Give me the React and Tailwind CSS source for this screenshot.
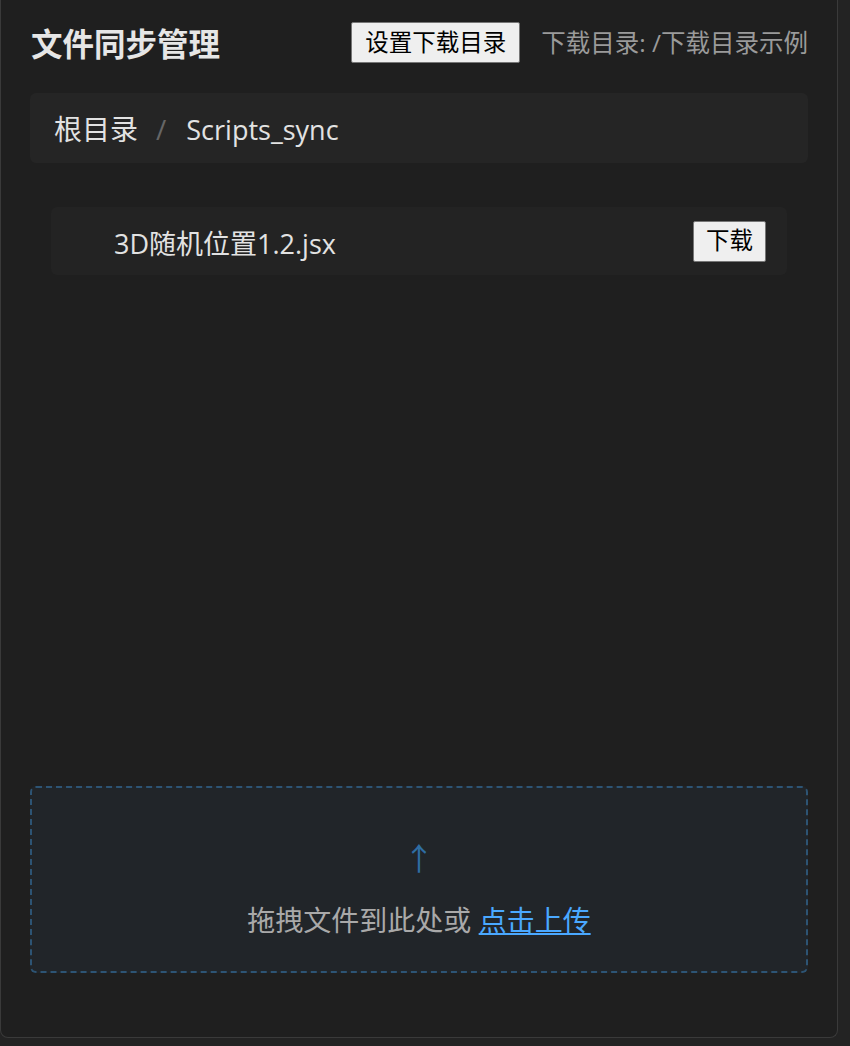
import React from "react";

const files = [{ name: "3D随机位置1.2.jsx" }];

const font = "font-['Open_Sans','Noto_Sans_CJK_SC',sans-serif]";

const App = () => {
  return (
    <div className={`min-h-screen bg-[#232323] ${font}`}>
      <div className="w-[838px] h-[1038px] bg-[#1f1f1f] border border-t-0 border-[#3a3a3a] rounded-b-lg flex flex-col px-[29px] pt-[22px] pb-[64px]">
        {/* Header */}
        <div className="flex items-center justify-between h-[41px]">
          <h1 className="text-[31.5px] font-bold leading-none text-[#e6e6e6] pl-px pt-[2px]">
            文件同步管理
          </h1>
          <div className="flex items-center gap-[21px]">
            <button className="h-[41px] px-[13px] bg-[#efefef] border border-[#767676] rounded-[2px] text-[23.5px] leading-none text-black">
              设置下载目录
            </button>
            <span className="text-[24.5px] leading-none text-[#9a9a9a] pt-[2px]">
              下载目录: /下载目录示例
            </span>
          </div>
        </div>

        {/* Breadcrumb */}
        <div className="mt-[30px] h-[70px] bg-[#252525] rounded-md flex items-center px-[24px] pt-[2px] text-[28px] leading-none text-[#e2e2e2]">
          <span>根目录</span>
          <span className="ml-[18px] mr-[20px] text-[#666]">/</span>
          <span className="text-[27px]">Scripts_sync</span>
        </div>

        {/* File list */}
        <div className="flex-1 mt-[23px] mb-[22px] px-[21px] py-[21px] flex flex-col gap-2">
          {files.map((f) => (
            <div
              key={f.name}
              className="h-[68px] bg-[#232323] rounded-md flex items-center justify-between pl-[63px] pr-[21px]"
            >
              <span className="text-[27px] leading-none text-[#e2e2e2] pt-[5px]">{f.name}</span>
              <button className="h-[41px] px-[12px] bg-[#efefef] border border-[#767676] rounded-[2px] text-[23.5px] leading-none text-black">
                下载
              </button>
            </div>
          ))}
        </div>

        {/* Upload drop zone */}
        <div className="h-[187px] bg-[#212529] border-2 border-dashed border-[#2d5474] rounded-md flex flex-col items-center justify-center pt-[18px]">
          <span className="text-[31px] leading-none text-[#2f6ea3]">↑</span>
          <p className="mt-[32px] text-[28px] leading-none text-[#a9a9a9]">
            拖拽文件到此处或{" "}
            <a href="#" className="text-[#4aa8ff] underline">
              点击上传
            </a>
          </p>
        </div>
      </div>
    </div>
  );
};

export default App;
